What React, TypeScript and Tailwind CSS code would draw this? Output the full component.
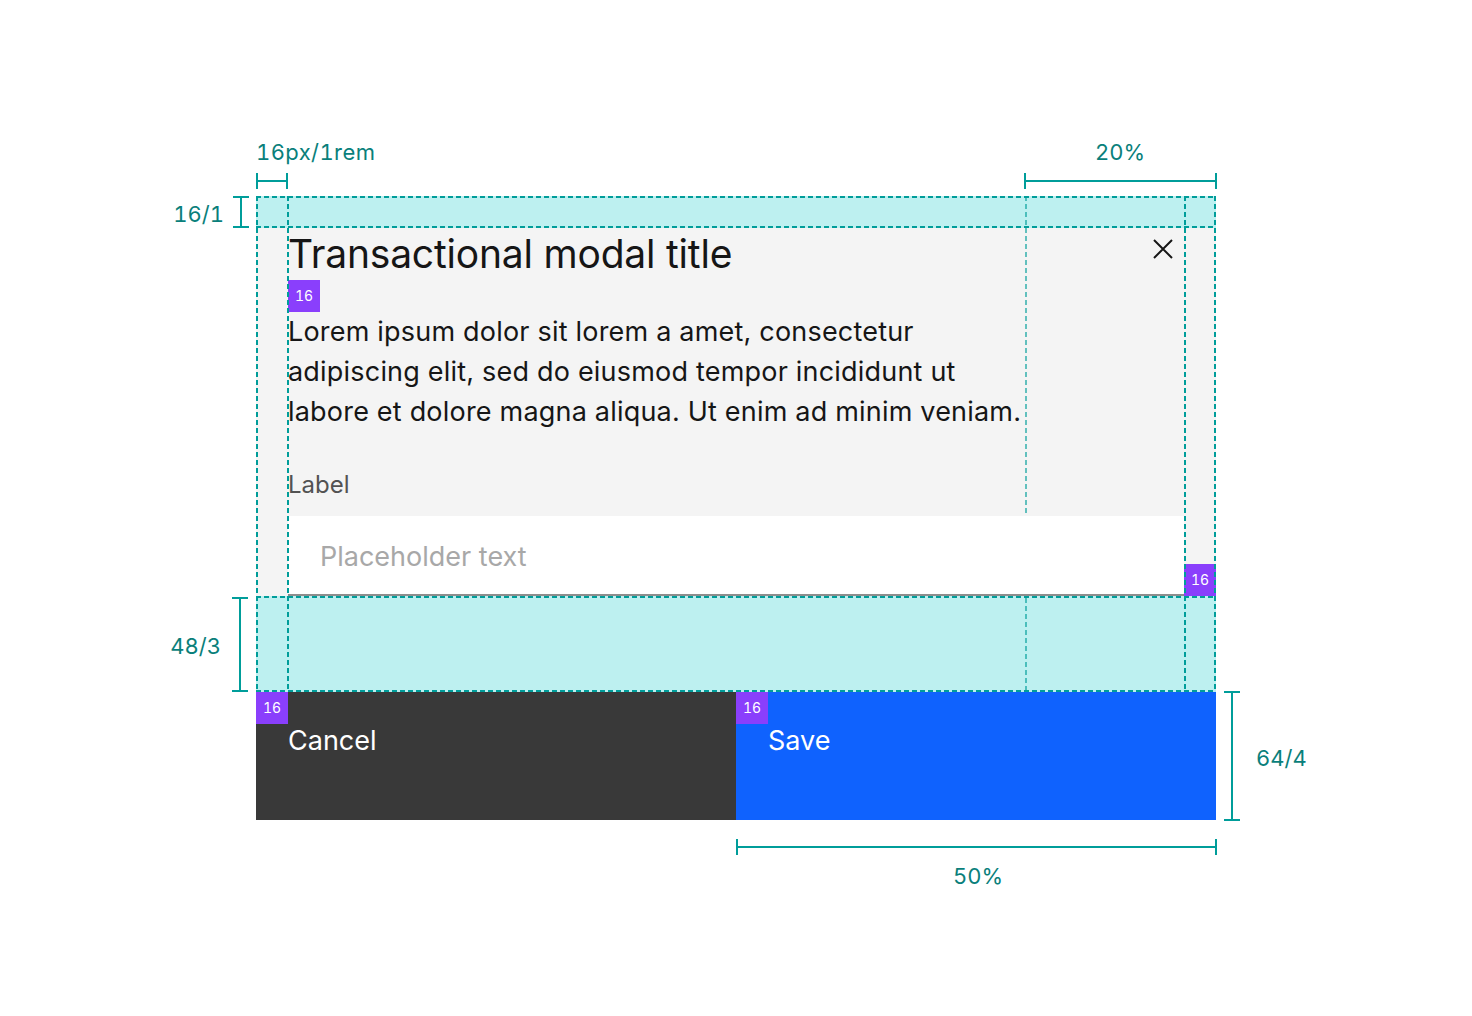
import React from "react";

const Badge = () => (
  <div className="w-[32px] h-[32px] bg-[#8a3ffc] text-white text-[14px] leading-[32px] text-center shrink-0 tabular-nums">16</div>
);

const teal = "#009d9a";

export default function App() {
  return (
    <div
      className="relative w-[1472px] h-[1016px] bg-white overflow-hidden pt-[196px] pl-[256px]"
      style={{ fontFamily: "Inter, 'Noto Sans', sans-serif" }}
    >
      {/* Modal */}
      <div className="relative w-[960px]">
        <div className="h-[32px] bg-[#bdf0f0]" />
        <div className="flex bg-[#f4f4f4]">
          <div className="w-[32px] shrink-0" />
          <div className="flex-1 flex flex-col">
            <div className="flex h-[52px]">
              <h1 className="w-[737px] text-[39px] leading-[52px] text-[#161616] font-normal tracking-[-0.2px]">
                Transactional modal title
              </h1>
              <div className="flex-1 flex justify-end pt-[11px] pr-[11px]">
                <svg width="20" height="20" viewBox="0 0 20 20">
                  <path d="M1 1 L19 19 M19 1 L1 19" stroke="#161616" strokeWidth="2" />
                </svg>
              </div>
            </div>
            <Badge />
            <p className="w-[737px] text-[27px] leading-[40px] text-[#161616] tracking-[0.2px]">
              Lorem ipsum dolor sit lorem a amet, consectetur
              <br />
              adipiscing elit, sed do eiusmod tempor incididunt ut
              <br />
              labore et dolore magna aliqua. Ut enim ad minim veniam.
            </p>
            <div className="mt-[37px] h-[31px] text-[24px] leading-[32px] text-[#525252]">Label</div>
            <div className="mt-[16px] h-[80px] bg-white border-b-2 border-[#8d8d8d] flex items-center pl-[32px] pt-[4px] text-[27px] text-[#a8a8a8]">
              Placeholder text
            </div>
          </div>
          <div className="w-[32px] shrink-0 flex flex-col justify-end">
            <Badge />
          </div>
        </div>
        <div className="h-[96px] bg-[#bdf0f0]" />
        <div className="flex h-[128px]">
          <div className="flex-1 bg-[#393939] flex flex-col">
            <Badge />
            <div className="pl-[32px] pt-[1px] text-[27px] leading-[32px] text-white">Cancel</div>
          </div>
          <div className="flex-1 bg-[#0f62fe] flex flex-col">
            <Badge />
            <div className="pl-[32px] pt-[1px] text-[27px] leading-[32px] text-white">Save</div>
          </div>
        </div>

        {/* dashed redline overlay */}
        <svg className="absolute left-0 top-0 pointer-events-none" width="960" height="624">
          <g stroke={teal} strokeWidth="2" strokeDasharray="5 3" fill="none">
            <line x1="0" y1="1" x2="960" y2="1" />
            <line x1="0" y1="31" x2="960" y2="31" />
            <line x1="0" y1="401" x2="960" y2="401" />
            <line x1="0" y1="495" x2="960" y2="495" />
            <line x1="1" y1="0" x2="1" y2="496" />
            <line x1="32" y1="0" x2="32" y2="496" />
            <line x1="929" y1="0" x2="929" y2="496" />
            <line x1="959" y1="0" x2="959" y2="496" />
          </g>
          <g stroke={teal} strokeWidth="2" strokeDasharray="5 3" fill="none" opacity="0.6">
            <line x1="770" y1="0" x2="770" y2="318" />
            <line x1="770" y1="402" x2="770" y2="495" />
          </g>
        </svg>
      </div>

      {/* bracket overlay */}
      <svg className="absolute left-0 top-0 pointer-events-none" width="1472" height="1016">
        <g stroke={teal} strokeWidth="2" fill="none">
          <line x1="257" y1="181" x2="287" y2="181" />
          <line x1="257" y1="173" x2="257" y2="189" />
          <line x1="287" y1="173" x2="287" y2="189" />
          <line x1="1025" y1="181" x2="1216" y2="181" />
          <line x1="1025" y1="173" x2="1025" y2="189" />
          <line x1="1216" y1="173" x2="1216" y2="189" />
          <line x1="241" y1="197" x2="241" y2="227" />
          <line x1="233" y1="197" x2="249" y2="197" />
          <line x1="233" y1="227" x2="249" y2="227" />
          <line x1="240" y1="598" x2="240" y2="691" />
          <line x1="232" y1="598" x2="248" y2="598" />
          <line x1="232" y1="691" x2="248" y2="691" />
          <line x1="1232" y1="692" x2="1232" y2="820" />
          <line x1="1224" y1="692" x2="1240" y2="692" />
          <line x1="1224" y1="820" x2="1240" y2="820" />
          <line x1="737" y1="847" x2="1216" y2="847" />
          <line x1="737" y1="839" x2="737" y2="855" />
          <line x1="1216" y1="839" x2="1216" y2="855" />
        </g>
      </svg>

      <div className="absolute left-[256px] top-[138px] text-[22px] leading-[28px] text-[#0a7f7b] tabular-nums tracking-[0.4px]">16px/1rem</div>
      <div className="absolute left-[1070px] w-[100px] text-center top-[138px] text-[22px] leading-[28px] text-[#0a7f7b] tabular-nums">20%</div>
      <div className="absolute right-[1248px] top-[200px] text-[22px] leading-[28px] text-[#0a7f7b] tabular-nums">16/1</div>
      <div className="absolute right-[1251px] top-[632px] text-[22px] leading-[28px] text-[#0a7f7b] tabular-nums">48/3</div>
      <div className="absolute left-[1256px] top-[744px] text-[22px] leading-[28px] text-[#0a7f7b] tabular-nums">64/4</div>
      <div className="absolute left-[928px] w-[100px] text-center top-[862px] text-[22px] leading-[28px] text-[#0a7f7b] tabular-nums">50%</div>
    </div>
  );
}
